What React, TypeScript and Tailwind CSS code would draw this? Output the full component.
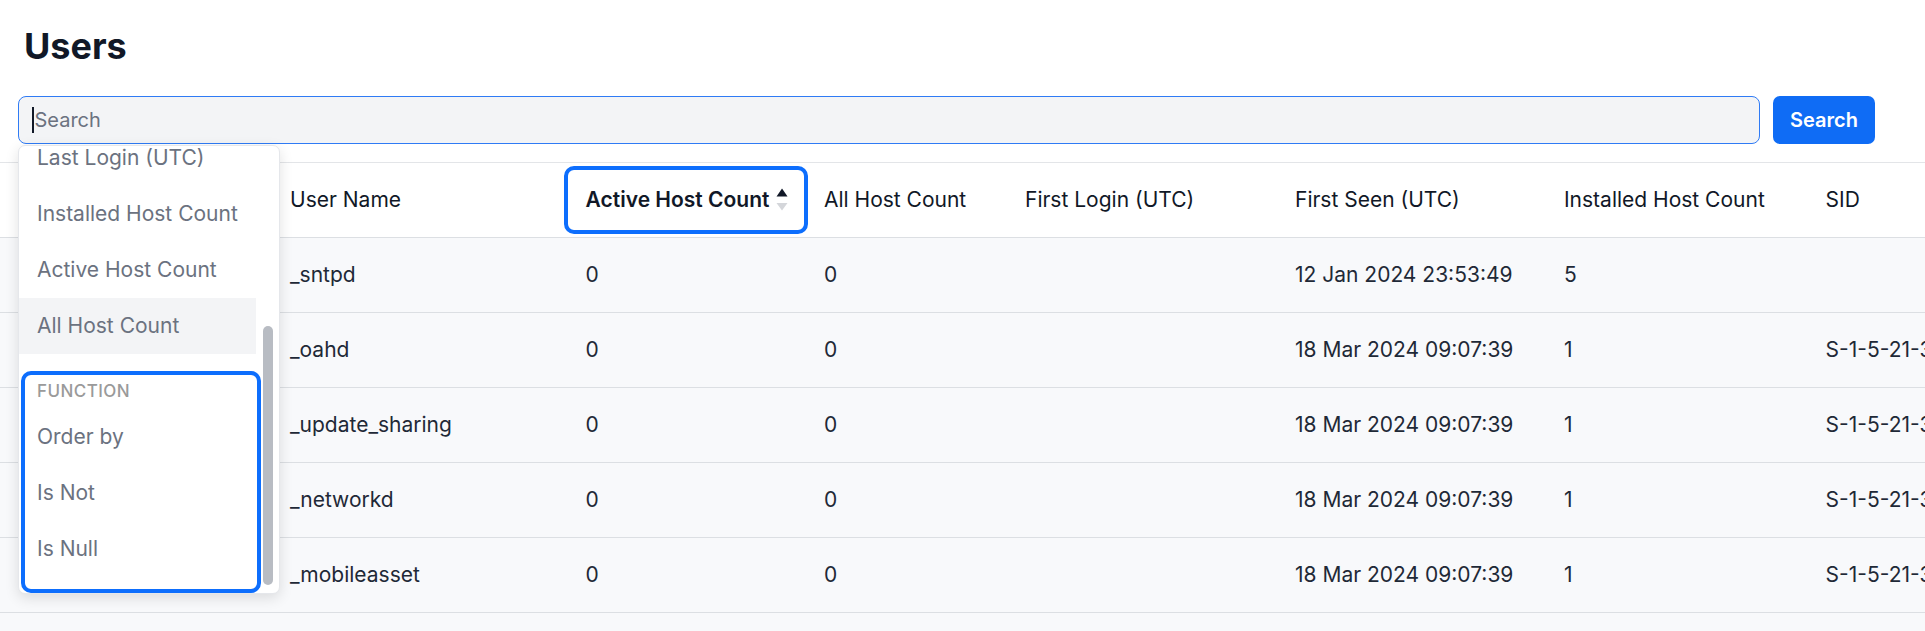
import React from "react";

type Row = {
  name: string;
  active: string;
  all: string;
  firstLogin: string;
  firstSeen: string;
  installed: string;
  sid: string;
};

const rows: Row[] = [
  { name: "_sntpd", active: "0", all: "0", firstLogin: "", firstSeen: "12 Jan 2024 23:53:49", installed: "5", sid: "" },
  { name: "_oahd", active: "0", all: "0", firstLogin: "", firstSeen: "18 Mar 2024 09:07:39", installed: "1", sid: "S-1-5-21-3817224568-1422" },
  { name: "_update_sharing", active: "0", all: "0", firstLogin: "", firstSeen: "18 Mar 2024 09:07:39", installed: "1", sid: "S-1-5-21-3817224568-1422" },
  { name: "_networkd", active: "0", all: "0", firstLogin: "", firstSeen: "18 Mar 2024 09:07:39", installed: "1", sid: "S-1-5-21-3817224568-1422" },
  { name: "_mobileasset", active: "0", all: "0", firstLogin: "", firstSeen: "18 Mar 2024 09:07:39", installed: "1", sid: "S-1-5-21-3817224568-1422" },
  { name: "_spotlight", active: "0", all: "0", firstLogin: "", firstSeen: "18 Mar 2024 09:07:39", installed: "1", sid: "S-1-5-21-3817224568-1422" },
];

// column widths follow the reference's text starts
const cols = "grid grid-cols-[270px_295.6px_238.4px_201px_270px_269px_261.6px_400px]";

function SortIcon() {
  return (
    <svg width="12" height="26" viewBox="0 0 12 26" className="ml-[7px] shrink-0">
      <path d="M6 1.5 L11.5 9.5 L0.5 9.5 Z" fill="#111827" />
      <path d="M0.5 16 L11.5 16 L6 23.5 Z" fill="#d4d6da" />
    </svg>
  );
}

function Dropdown() {
  const items = ["Last Login (UTC)", "Installed Host Count", "Active Host Count", "All Host Count"];
  return (
    <div className="absolute left-[18px] top-[145px] z-10 h-[449px] w-[262px] overflow-hidden rounded-[7px] border border-[#e5e7eb] bg-white shadow-[0_4px_14px_rgba(0,0,0,0.12)]">
      <div className="-mt-[16px] w-[242px]">
        {items.map((it) => (
          <div
            key={it}
            className={`flex h-[56px] w-[237px] items-center pl-[18px] text-[21px] text-[#6b7280] ${it === "All Host Count" ? "bg-[#f3f4f6]" : ""}`}
          >
            {it}
          </div>
        ))}
        <div className="ml-[2px] mt-[17px] w-[240px] rounded-[10px] border-4 border-[#0d6efd] pb-[12px]">
          <div className="flex h-[34px] items-center pl-[12px] text-[17px] font-medium uppercase tracking-wide text-[#9a9a9a]">
            Function
          </div>
          {["Order by", "Is Not", "Is Null"].map((it) => (
            <div key={it} className="flex h-[56px] items-center pl-[12px] text-[21px] text-[#6b7280]">
              {it}
            </div>
          ))}
        </div>
      </div>
      <div className="absolute left-[244px] top-[180px] h-[259px] w-[10px] rounded-full bg-[#b8bcc3]" />
    </div>
  );
}

export default function App() {
  const headers = ["", "User Name", "Active Host Count", "All Host Count", "First Login (UTC)", "First Seen (UTC)", "Installed Host Count", "SID"];
  return (
    <div className="relative h-[631px] w-[1925px] overflow-hidden bg-white font-['Inter',sans-serif] text-[#1f2937]">
      <h1 className="pl-[24px] pt-[24px] text-[36px] font-bold leading-[44px] text-[#111827]">Users</h1>
      <div className="mt-[28px] flex gap-[13px] pl-[18px] pr-[50px]">
        <div className="flex h-[48px] flex-1 items-center rounded-[8px] border border-[#2f7bf5] bg-[#f3f4f6] pl-[13px]">
          <span className="mr-[1px] h-[26px] w-[1.5px] bg-[#111827]" />
          <span className="text-[20px] text-[#6b7280]">Search</span>
        </div>
        <button className="h-[48px] w-[102px] rounded-[7px] bg-[#0f6cf5] text-[20px] font-semibold text-white">Search</button>
      </div>
      <div className="mt-[18px] border-t border-[#e3e5e8]">
        <div className={`${cols} h-[75px] border-b border-[#dcdfe3] bg-white text-[21px] text-[#111827]`}>
          {headers.map((h, i) => (
            <div key={i} className="relative flex items-center pl-[20px] whitespace-nowrap">
              {i === 2 ? (
                <>
                  <span className="font-semibold">{h}</span>
                  <SortIcon />
                  <div className="absolute -left-[2px] -right-[4px] top-[3px] bottom-[3px] rounded-[10px] border-4 border-[#0d6efd]" />
                </>
              ) : (
                h
              )}
            </div>
          ))}
        </div>
        {rows.map((r) => (
          <div key={r.name} className={`${cols} h-[75px] border-b border-[#dcdfe3] bg-[#f8f9fb] text-[21px] text-[#1f2937]`}>
            <div />
            {[r.name, r.active, r.all, r.firstLogin, r.firstSeen, r.installed, r.sid].map((v, i) => (
              <div key={i} className="flex items-center pl-[20px] whitespace-nowrap">
                {v}
              </div>
            ))}
          </div>
        ))}
      </div>
      <Dropdown />
    </div>
  );
}
